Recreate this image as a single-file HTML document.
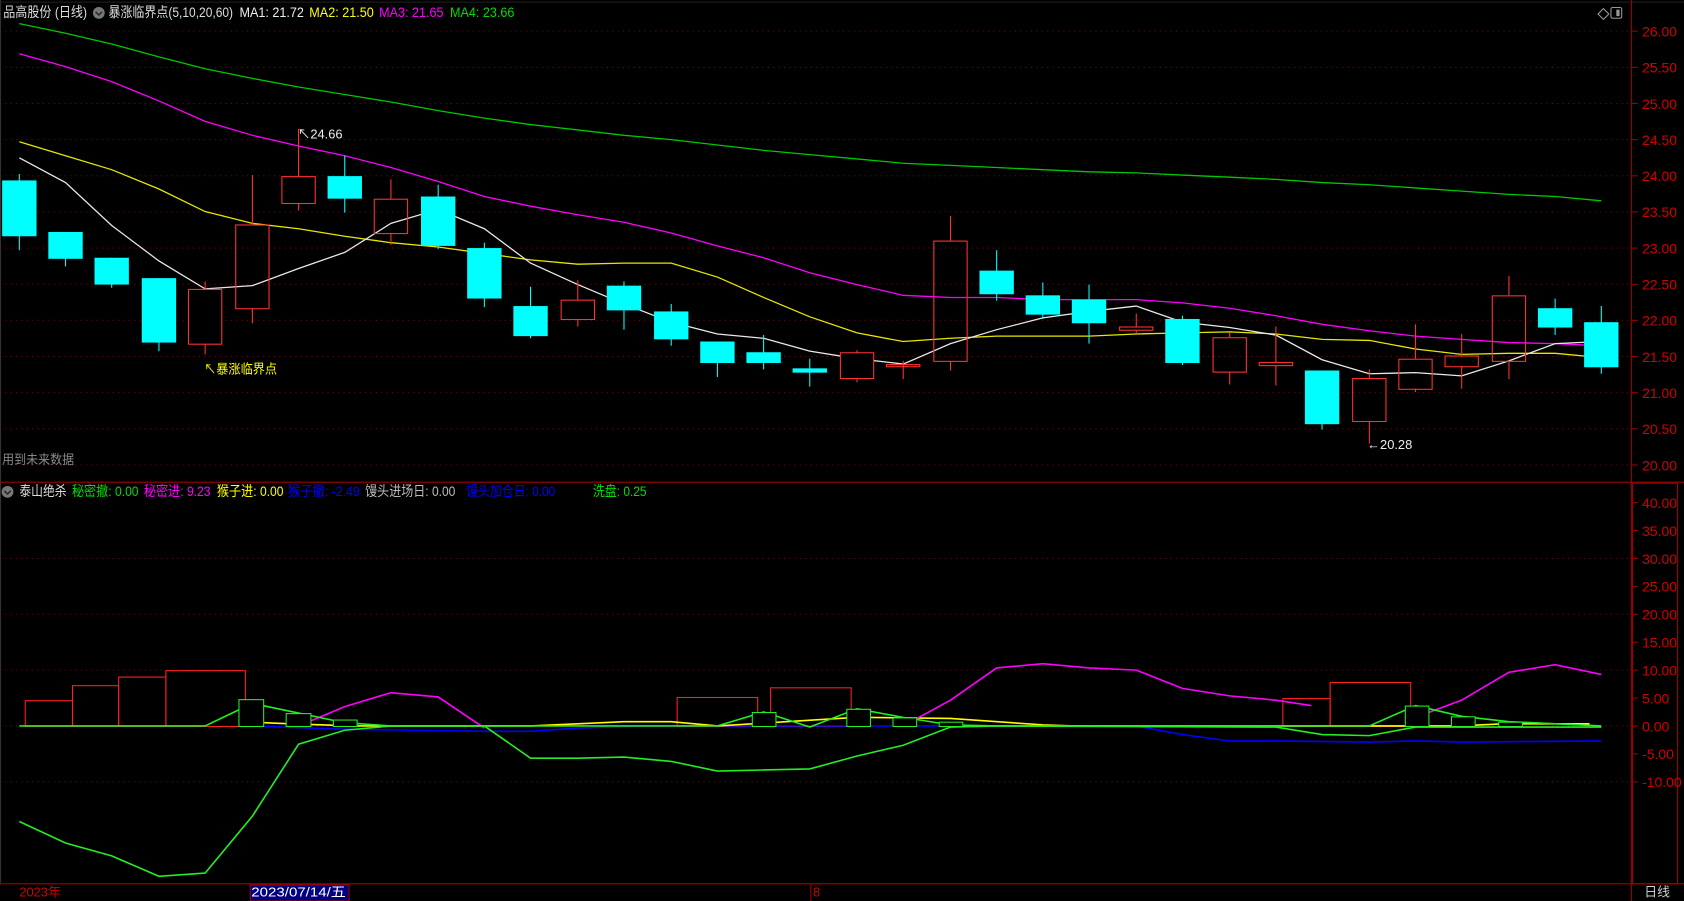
<!DOCTYPE html>
<html><head><meta charset="utf-8"><style>
html,body{margin:0;padding:0;background:#000;overflow:hidden}
svg{display:block}
text{font-family:"Liberation Sans","Noto Sans CJK SC",sans-serif}
</style></head><body>
<svg width="1684" height="901" viewBox="0 0 1568 839" preserveAspectRatio="none" xmlns="http://www.w3.org/2000/svg">
<rect width="1568" height="839" fill="#000"/>
<line x1="0" y1="2" x2="1568" y2="2" stroke="#222" stroke-width="1"/>
<g stroke="#7a0000" stroke-width="1" stroke-dasharray="1,4">
<line x1="0" y1="29" x2="1519" y2="29"/><line x1="0" y1="62.7" x2="1519" y2="62.7"/><line x1="0" y1="96.3" x2="1519" y2="96.3"/><line x1="0" y1="130" x2="1519" y2="130"/><line x1="0" y1="163.7" x2="1519" y2="163.7"/><line x1="0" y1="197.3" x2="1519" y2="197.3"/><line x1="0" y1="231" x2="1519" y2="231"/><line x1="0" y1="264.7" x2="1519" y2="264.7"/><line x1="0" y1="298.3" x2="1519" y2="298.3"/><line x1="0" y1="332" x2="1519" y2="332"/><line x1="0" y1="365.7" x2="1519" y2="365.7"/><line x1="0" y1="399.3" x2="1519" y2="399.3"/><line x1="0" y1="433" x2="1519" y2="433"/>
<line x1="0" y1="520" x2="1519" y2="520"/><line x1="0" y1="572" x2="1519" y2="572"/><line x1="0" y1="624" x2="1519" y2="624"/><line x1="0" y1="676" x2="1519" y2="676"/><line x1="0" y1="728" x2="1519" y2="728"/>
</g>
<g stroke="#a00000" stroke-width="1" fill="none">
<line x1="1519" y1="0" x2="1519" y2="839"/>
<line x1="0" y1="449" x2="1568" y2="449"/>
<line x1="0" y1="823" x2="1568" y2="823"/>
<rect x="1520" y="450" width="42" height="373"/>
<line x1="0.5" y1="0" x2="0.5" y2="823" stroke="#333"/>
</g>
<g stroke="#a00000" stroke-width="1">
<line x1="1519" y1="29" x2="1525" y2="29"/><line x1="1519" y1="62.7" x2="1525" y2="62.7"/><line x1="1519" y1="96.3" x2="1525" y2="96.3"/><line x1="1519" y1="130" x2="1525" y2="130"/><line x1="1519" y1="163.7" x2="1525" y2="163.7"/><line x1="1519" y1="197.3" x2="1525" y2="197.3"/><line x1="1519" y1="231" x2="1525" y2="231"/><line x1="1519" y1="264.7" x2="1525" y2="264.7"/><line x1="1519" y1="298.3" x2="1525" y2="298.3"/><line x1="1519" y1="332" x2="1525" y2="332"/><line x1="1519" y1="365.7" x2="1525" y2="365.7"/><line x1="1519" y1="399.3" x2="1525" y2="399.3"/><line x1="1519" y1="433" x2="1525" y2="433"/>
<line x1="1519" y1="468" x2="1525" y2="468"/><line x1="1519" y1="494" x2="1525" y2="494"/><line x1="1519" y1="520" x2="1525" y2="520"/><line x1="1519" y1="546" x2="1525" y2="546"/><line x1="1519" y1="572" x2="1525" y2="572"/><line x1="1519" y1="598" x2="1525" y2="598"/><line x1="1519" y1="624" x2="1525" y2="624"/><line x1="1519" y1="650" x2="1525" y2="650"/><line x1="1519" y1="676" x2="1525" y2="676"/><line x1="1519" y1="702" x2="1525" y2="702"/><line x1="1519" y1="728" x2="1525" y2="728"/>
<line x1="755" y1="823" x2="755" y2="839"/>
</g>
<g fill="#d00000" font-size="13">
<text x="1529" y="34">26.00</text><text x="1529" y="67.7">25.50</text><text x="1529" y="101.3">25.00</text><text x="1529" y="135">24.50</text><text x="1529" y="168.7">24.00</text><text x="1529" y="202.3">23.50</text><text x="1529" y="236">23.00</text><text x="1529" y="269.7">22.50</text><text x="1529" y="303.3">22.00</text><text x="1529" y="337">21.50</text><text x="1529" y="370.7">21.00</text><text x="1529" y="404.3">20.50</text><text x="1529" y="438">20.00</text>
<text x="1529" y="473">40.00</text><text x="1529" y="499">35.00</text><text x="1529" y="525">30.00</text><text x="1529" y="551">25.00</text><text x="1529" y="577">20.00</text><text x="1529" y="603">15.00</text><text x="1529" y="629">10.00</text><text x="1529" y="655">5.00</text><text x="1529" y="681">0.00</text><text x="1529" y="707">-5.00</text><text x="1529" y="733">-10.00</text>
<text x="18" y="835" font-size="12">2023年</text><text x="757" y="835" font-size="12">8</text>
</g>
<rect x="233" y="824" width="92" height="15" fill="#000080" stroke="#a00000"/>
<text x="234" y="835" font-size="12" fill="#fff" textLength="88" lengthAdjust="spacingAndGlyphs">2023/07/14/五</text>
<text x="1531" y="835" font-size="12" fill="#ccc">日线</text>
<path d="M1493 8 l5 5 -5 5 -5 -5z" fill="none" stroke="#999"/>
<rect x="1500" y="7" width="10" height="10" rx="1.5" fill="none" stroke="#999"/>
<rect x="1505" y="9" width="3" height="6" fill="#999"/>

<g font-size="13">
<text x="3" y="16" fill="#ddd" textLength="78" lengthAdjust="spacingAndGlyphs">品高股份 (日线)</text>
<circle cx="92" cy="12" r="5.5" fill="#777"/><path d="M89 11 l3 3 3-3" stroke="#222" fill="none" stroke-width="1.3"/>
<text x="101" y="16" fill="#ddd" textLength="116" lengthAdjust="spacingAndGlyphs">暴涨临界点(5,10,20,60)</text>
<text x="223" y="16" fill="#eee" textLength="60" lengthAdjust="spacingAndGlyphs">MA1: 21.72</text>
<text x="288" y="16" fill="#ffff00" textLength="60" lengthAdjust="spacingAndGlyphs">MA2: 21.50</text>
<text x="353" y="16" fill="#ff00ff" textLength="60" lengthAdjust="spacingAndGlyphs">MA3: 21.65</text>
<text x="419" y="16" fill="#00dd00" textLength="60" lengthAdjust="spacingAndGlyphs">MA4: 23.66</text>
</g>
<g font-size="13">
<circle cx="7" cy="458" r="5.5" fill="#777"/><path d="M4 457 l3 3 3-3" stroke="#222" fill="none" stroke-width="1.3"/>
<text x="18" y="462" fill="#ddd" textLength="44" lengthAdjust="spacingAndGlyphs">泰山绝杀</text>
<text x="67" y="462" fill="#00dd00" textLength="62" lengthAdjust="spacingAndGlyphs">秘密撤: 0.00</text>
<text x="134" y="462" fill="#ff00ff" textLength="62" lengthAdjust="spacingAndGlyphs">秘密进: 9.23</text>
<text x="202" y="462" fill="#ffff00" textLength="62" lengthAdjust="spacingAndGlyphs">猴子进: 0.00</text>
<text x="268" y="462" fill="#0000ff" textLength="67" lengthAdjust="spacingAndGlyphs">猴子撤: -2.49</text>
<text x="340" y="462" fill="#bbb" textLength="84" lengthAdjust="spacingAndGlyphs">馒头进场日: 0.00</text>
<text x="434" y="462" fill="#0000ff" textLength="83" lengthAdjust="spacingAndGlyphs">馒头加仓日: 0.00</text>
<text x="552" y="462" fill="#00dd00" textLength="50" lengthAdjust="spacingAndGlyphs">洗盘: 0.25</text>
</g>

<g fill="none" stroke-width="1.2">
<polyline stroke="#00c800" points="18,22 61,31 104,41 148,53 191,64 235,73 278,81 321,88 364,95 408,103 451,110 494,116 538,121 581,126 625,130 668,135 711,140 754,144 798,148 841,152 885,154 928,156 971,158 1014,160 1058,161 1101,163 1145,165 1188,167 1231,170 1275,172 1318,175 1361,178 1405,181 1448,183 1491,187"/>
<polyline stroke="#ff00ff" points="18,50 61,62 104,76 148,94 191,113 235,126 278,136 321,145 364,156 408,169 451,183 494,192 538,200 581,207 625,217 668,229 711,240 754,254 798,265 841,275 885,277 928,277 971,279 1014,279 1058,279 1101,282 1145,287 1188,294 1231,302 1275,308 1318,313 1361,316 1405,319 1448,320 1491,322"/>
<polyline stroke="#e6e600" points="18,132 61,145 104,158 148,176 191,197 235,208 278,213 321,220 364,226 408,230 451,236 494,242 538,246 581,245 625,245 668,258 711,277 754,295 798,310 841,318 885,315 928,313 971,313 1014,313 1058,311 1101,310 1145,309 1188,311 1231,316 1275,317 1318,325 1361,330 1405,329 1448,329 1491,333"/>
<polyline stroke="#e8e8e8" points="18,147 61,170 104,210 148,243 191,269 235,266 278,250 321,235 364,208 408,195 451,213 494,245 538,265 581,283 625,300 668,311 711,315 754,327 798,334 841,339 885,320 928,307 971,296 1014,290 1058,285 1101,300 1145,305 1188,312 1231,335 1275,348 1318,347 1361,350 1405,336 1448,320 1491,318"/>
</g>

<g stroke="#00ffff" stroke-width="1">
<line x1="18" y1="162" x2="18" y2="233"/><line x1="61" y1="216" x2="61" y2="248"/><line x1="104" y1="240" x2="104" y2="268"/><line x1="148" y1="259" x2="148" y2="327"/><line x1="321" y1="145" x2="321" y2="198"/><line x1="408" y1="172" x2="408" y2="232"/><line x1="451" y1="226" x2="451" y2="286"/><line x1="494" y1="267" x2="494" y2="315"/><line x1="581" y1="262" x2="581" y2="307"/><line x1="625" y1="283" x2="625" y2="322"/><line x1="668" y1="318" x2="668" y2="351"/><line x1="711" y1="312" x2="711" y2="344"/><line x1="754" y1="334" x2="754" y2="360"/><line x1="928" y1="233" x2="928" y2="280"/><line x1="971" y1="263" x2="971" y2="297"/><line x1="1014" y1="265" x2="1014" y2="320"/><line x1="1101" y1="294" x2="1101" y2="340"/><line x1="1231" y1="345" x2="1231" y2="400"/><line x1="1448" y1="278" x2="1448" y2="312"/><line x1="1491" y1="285" x2="1491" y2="348"/>
</g>
<g fill="#00ffff">
<rect x="2" y="168" width="32" height="52"/><rect x="45" y="216" width="32" height="25"/><rect x="88" y="240" width="32" height="25"/><rect x="132" y="259" width="32" height="60"/><rect x="305" y="164" width="32" height="21"/><rect x="392" y="183" width="32" height="46"/><rect x="435" y="231" width="32" height="47"/><rect x="478" y="285" width="32" height="28"/><rect x="565" y="266" width="32" height="23"/><rect x="609" y="290" width="32" height="26"/><rect x="652" y="318" width="32" height="20"/><rect x="695" y="328" width="32" height="10"/><rect x="738" y="343" width="32" height="4"/><rect x="912" y="252" width="32" height="22"/><rect x="955" y="275" width="32" height="18"/><rect x="998" y="279" width="32" height="22"/><rect x="1085" y="297" width="32" height="41"/><rect x="1215" y="345" width="32" height="50"/><rect x="1432" y="287" width="32" height="18"/><rect x="1475" y="300" width="32" height="42"/>
</g>
<g stroke="#ff3232" stroke-width="1" fill="none">
<line x1="191" y1="262" x2="191" y2="269"/><line x1="191" y1="320" x2="191" y2="330"/><rect x="175.5" y="269.5" width="31" height="51" fill="#000"/>
<line x1="235" y1="163" x2="235" y2="209"/><line x1="235" y1="287" x2="235" y2="301"/><rect x="219.5" y="209.5" width="31" height="78"/>
<line x1="278" y1="120" x2="278" y2="164"/><line x1="278" y1="189" x2="278" y2="196"/><rect x="262.5" y="164.5" width="31" height="25"/>
<line x1="364" y1="167" x2="364" y2="185"/><line x1="364" y1="217" x2="364" y2="228"/><rect x="348.5" y="185.5" width="31" height="32"/>
<line x1="538" y1="261" x2="538" y2="279"/><line x1="538" y1="297" x2="538" y2="304"/><rect x="522.5" y="279.5" width="31" height="18"/>
<line x1="798" y1="326" x2="798" y2="356"/><rect x="782.5" y="328.5" width="31" height="24" fill="#000"/>
<line x1="841" y1="336" x2="841" y2="353"/><rect x="825.5" y="339.5" width="31" height="2"/>
<line x1="885" y1="201" x2="885" y2="224"/><line x1="885" y1="336" x2="885" y2="345"/><rect x="869.5" y="224.5" width="31" height="112"/>
<line x1="1058" y1="292" x2="1058" y2="310"/><rect x="1042.5" y="304.5" width="31" height="3" fill="#000"/>
<line x1="1145" y1="310" x2="1145" y2="314"/><line x1="1145" y1="346" x2="1145" y2="358"/><rect x="1129.5" y="314.5" width="31" height="32"/>
<line x1="1188" y1="304" x2="1188" y2="359"/><rect x="1172.5" y="337.5" width="31" height="3" fill="#000"/>
<line x1="1275" y1="344" x2="1275" y2="352"/><line x1="1275" y1="392" x2="1275" y2="413"/><rect x="1259.5" y="352.5" width="31" height="40"/>
<line x1="1318" y1="302" x2="1318" y2="334"/><line x1="1318" y1="362" x2="1318" y2="365"/><rect x="1302.5" y="334.5" width="31" height="28"/>
<line x1="1361" y1="311" x2="1361" y2="331"/><line x1="1361" y1="341" x2="1361" y2="362"/><rect x="1345.5" y="331.5" width="31" height="10"/>
<line x1="1405" y1="257" x2="1405" y2="275"/><line x1="1405" y1="336" x2="1405" y2="353"/><rect x="1389.5" y="275.5" width="31" height="61"/>
</g>
<text x="277" y="129" font-size="12" fill="#eee">↖24.66</text>
<text x="190" y="348" font-size="12" fill="#ffff00" textLength="68" lengthAdjust="spacingAndGlyphs">↖暴涨临界点</text>
<text x="1273" y="418" font-size="12" fill="#eee">←20.28</text>
<text x="2" y="432" font-size="12" fill="#888" textLength="67" lengthAdjust="spacingAndGlyphs">用到未来数据</text>

<g fill="none" stroke="#ff2020" stroke-width="1">
<rect x="23.5" y="652.5" width="44" height="24"/><rect x="67.5" y="638.5" width="43" height="38"/><rect x="110.5" y="630.5" width="44" height="46"/><rect x="154.5" y="624.5" width="74" height="52"/>
<rect x="630.5" y="649.5" width="75" height="27"/><rect x="717.5" y="640.5" width="75" height="36"/>
<rect x="1194.5" y="650.5" width="44" height="26"/><rect x="1238.5" y="635.5" width="75" height="41"/>
</g>
<g fill="none" stroke-width="1.5">
<polyline stroke="#0000ff" points="235,676 320,679 451,681 494,681 538,678 600,676 1058,676 1101,684 1145,690 1188,690 1275,691 1318,690 1361,691 1491,690"/>
<polyline stroke="#ffff00" points="246,673 270,674 330,676 494,676 538,674 581,672 625,672 668,676 798,668 885,669 971,675 1000,676 1358,676 1400,674 1480,674"/>
<polyline stroke="#ff00ff" points="278,676 321,658 364,645 408,649 451,678"/>
<polyline stroke="#ff00ff" points="841,676 885,652 928,622 971,618 1014,622 1058,624 1101,641 1145,648 1188,652 1221,657"/>
<polyline stroke="#ff00ff" points="1318,668 1361,652 1405,626 1448,619 1491,628"/>
<polyline stroke="#22ee22" points="18,676 191,676 235,655 278,664 321,673 364,676 668,676 711,663 754,677 798,660 841,668 885,675 928,676 1275,676 1318,657 1361,667 1405,672 1491,676"/>
<polyline stroke="#22ee22" points="18,765 61,785 104,797 148,816 191,813 235,760 278,693 321,680 364,676 451,676 494,706 538,706 581,705 625,709 668,718 711,717 754,716 798,704 841,694 885,677 928,676 1188,677 1231,684 1275,685 1318,677 1491,677"/>
</g>
<g fill="#000" stroke="#22ee22" stroke-width="1">
<rect x="222.5" y="651.5" width="23" height="25"/><rect x="266.5" y="664.5" width="23" height="12"/><rect x="310.5" y="670.5" width="22" height="6"/>
<rect x="700.5" y="663.5" width="22" height="13"/><rect x="788.5" y="660.5" width="22" height="16"/><rect x="831.5" y="668.5" width="22" height="8"/><rect x="874.5" y="672.5" width="22" height="4"/>
<rect x="1308.5" y="657.5" width="22" height="19"/><rect x="1351.5" y="667.5" width="22" height="9"/><rect x="1395.5" y="672.5" width="22" height="4"/>
</g>
</svg>
</body></html>
